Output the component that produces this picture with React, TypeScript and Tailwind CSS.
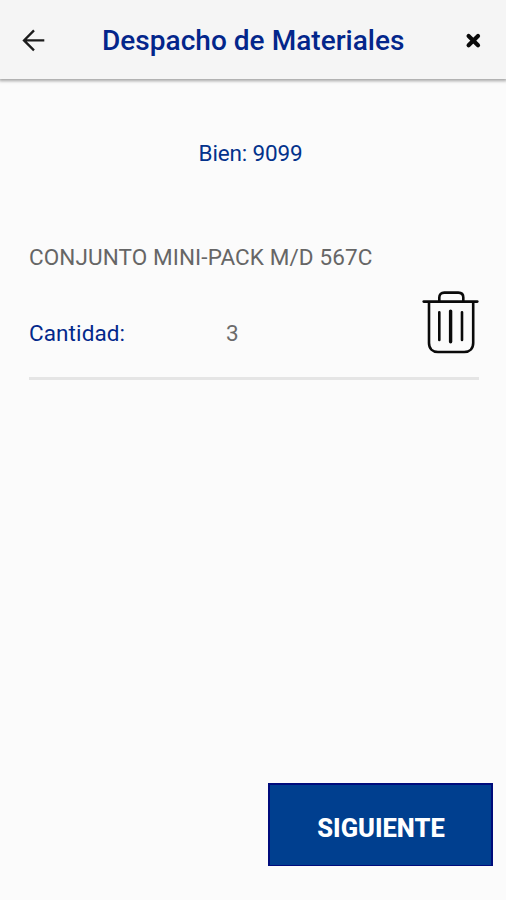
function BackIcon() {
  return (
    <svg width="24" height="24" viewBox="0 0 24 24" fill="none" stroke="#1c1c1c" strokeWidth="2.3">
      <path d="M22.3 11.4H2.5M12 1.4L2 11.4l10 10" />
    </svg>
  );
}

function CloseIcon() {
  return (
    <svg width="16" height="16" viewBox="0 0 16 16" fill="none" stroke="#0a0a0a" strokeWidth="4.2" strokeLinecap="round">
      <path d="M3.6 3l9.400 9.200M13 3l-9.400 9.200" />
    </svg>
  );
}

function TrashIcon() {
  return (
    <svg width="58" height="64" viewBox="0 0 58 64" fill="none" stroke="#0a0a0a" strokeWidth="2.6" strokeLinecap="round">
      <path d="M2.7 11.6h53.6" />
      <path d="M18.3 10.8V7.6c0-3.2 1.9-5 5-5h14c3.1 0 5 1.8 5 5v3.2" />
      <path d="M8 12.4V53c0 5.5 3.6 9 9 9h26.2c5.4 0 9-3.5 9-9V12.4" />
      <path d="M18.3 22.2V50M41 22.2V50" />
      <path d="M29.6 21.1v30.6" strokeWidth="3.4" />
    </svg>
  );
}

export default function App() {
  return (
    <div className="flex h-[900px] w-[506px] flex-col bg-[#fbfbfb] font-['Roboto',sans-serif]">
      <header className="flex h-[79px] shrink-0 items-center bg-[#f5f5f5] pl-[22px] pr-[25px] shadow-[0_1px_3px_1px_rgba(0,0,0,0.35)]">
        <button aria-label="Volver" className="mt-0.5">
          <BackIcon />
        </button>
        <h1 className="flex-1 whitespace-nowrap pl-[56px] pt-0.5 text-[28px] font-medium leading-[34px] tracking-[0.03px] text-[#03268b]">
          Despacho de Materiales
        </h1>
        <button aria-label="Cerrar" className="mt-0.5">
          <CloseIcon />
        </button>
      </header>

      <main className="flex flex-1 flex-col pl-[29px] pr-[27px]">
        <p className="mt-[60px] pr-[7px] text-center text-[22.5px] leading-7 tracking-[-0.15px] text-[#03328b]">
          Bien: 9099
        </p>
        <section className="mt-[76px] border-b-[3px] border-[#e5e5e5]">
          <h2 className="whitespace-nowrap text-[22.5px] leading-7 tracking-[0.1px] text-[#666666]">
            CONJUNTO MINI-PACK M/D 567C
          </h2>
          <div className="mt-[19px] flex h-[87px] items-start">
            <span className="mt-[29px] w-[197px] text-[22.5px] leading-7 tracking-[0.1px] text-[#03288b]">
              Cantidad:
            </span>
            <span className="mt-[29px] flex-1 text-[22.5px] leading-7 text-[#6b6b6b]">3</span>
            <button aria-label="Eliminar">
              <TrashIcon />
            </button>
          </div>
        </section>
      </main>

      <footer className="flex justify-end pb-[34px] pr-[13px]">
        <button className="h-[83px] w-[225px] border-2 border-b border-[#000c7c] bg-[#003f8f] pl-px pt-1.5 text-[25.5px] font-extrabold leading-8 text-white">
          SIGUIENTE
        </button>
      </footer>
    </div>
  );
}
